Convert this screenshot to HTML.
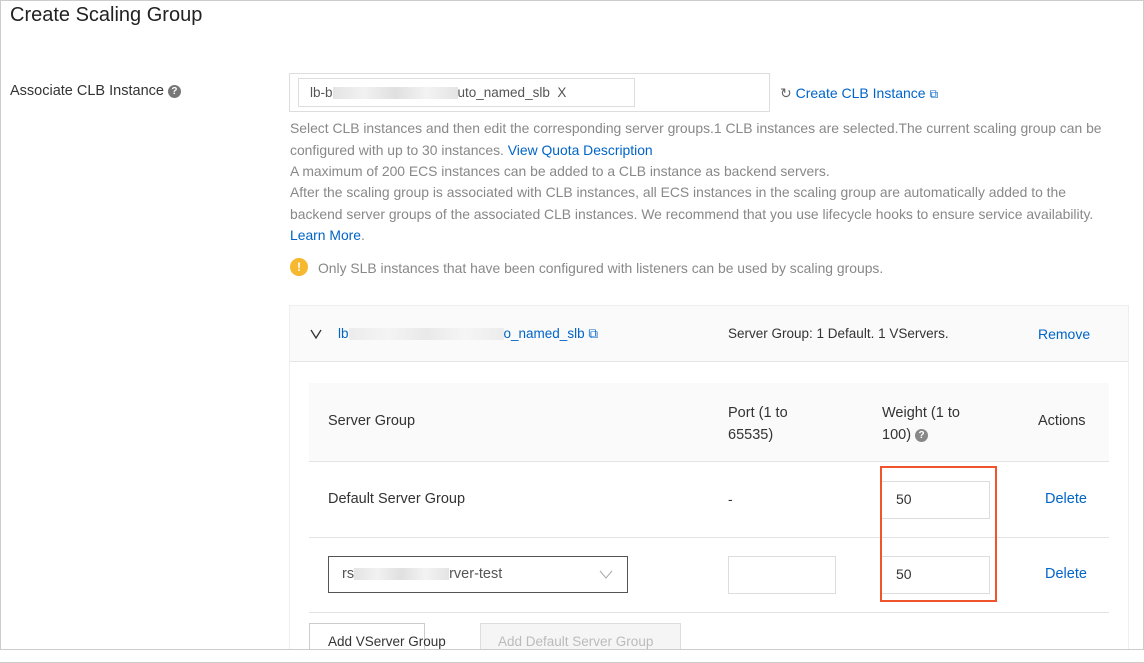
<!DOCTYPE html>
<html><head><meta charset="utf-8"><style>
*{margin:0;padding:0;box-sizing:border-box}
body{width:1144px;height:663px;background:#fff;font-family:"Liberation Sans",sans-serif;color:#333;position:relative;overflow:hidden;font-size:14px}
.a{position:absolute;white-space:nowrap}
.g{color:#888;font-size:13.9px}
.l{color:#0064c8}
.blur{display:inline-block;height:12px;background:linear-gradient(90deg,#ddd,#eee,#d8d8d8,#f0f0f0,#ddd);vertical-align:middle;opacity:.8}
.q{display:inline-block;width:13px;height:13px;border-radius:50%;background:#777;color:#fff;font-size:10px;text-align:center;line-height:13px;font-weight:bold;vertical-align:middle}
.box{position:absolute;border:1px solid #ddd;background:#fff}
</style></head><body>
<div style="position:absolute;left:0;top:0;width:1144px;height:1px;background:#ccc"></div>
<div style="position:absolute;left:0;top:0;width:1px;height:663px;background:#ccc"></div>
<div style="position:absolute;right:0;top:0;width:1px;height:663px;background:#ccc"></div>
<div class="a" style="left:10px;top:4px;font-size:20px;color:#222">Create Scaling Group</div>
<div class="a" style="left:10px;top:83px;font-size:14.5px">Associate CLB Instance <span class="q">?</span></div>

<div class="box" style="left:289px;top:73px;width:481px;height:39px"></div>
<div class="box" style="left:298px;top:78px;width:337px;height:29px"></div>
<div class="a" style="left:310px;top:85px;font-size:13.5px;color:#555">lb-b<span class="blur" style="width:125px"></span>uto_named_slb&nbsp;&nbsp;X</div>
<div class="a" style="left:780px;top:85px;font-size:14px"><span style="color:#666">↻</span> <span class="l">Create CLB Instance</span> <span class="l" style="font-size:12px">⧉</span></div>

<div class="a g" style="left:290px;top:120px">Select CLB instances and then edit the corresponding server groups.1 CLB instances are selected.The current scaling group can be</div>
<div class="a g" style="left:290px;top:142px">configured with up to 30 instances. <span class="l">View Quota Description</span></div>
<div class="a g" style="left:290px;top:163px">A maximum of 200 ECS instances can be added to a CLB instance as backend servers.</div>
<div class="a g" style="left:290px;top:184px">After the scaling group is associated with CLB instances, all ECS instances in the scaling group are automatically added to the</div>
<div class="a g" style="left:290px;top:206px">backend server groups of the associated CLB instances. We recommend that you use lifecycle hooks to ensure service availability.</div>
<div class="a g" style="left:290px;top:227px"><span class="l">Learn More</span>.</div>
<div class="a" style="left:290px;top:258px;width:18px;height:18px;border-radius:50%;background:#f5b82e;color:#fff;font-size:12px;text-align:center;line-height:18px;font-weight:bold">!</div>
<div class="a g" style="left:318px;top:260px">Only SLB instances that have been configured with listeners can be used by scaling groups.</div>

<div style="position:absolute;left:289px;top:305px;width:840px;height:344px;border:1px solid #eee;border-bottom:none"></div>
<div style="position:absolute;left:290px;top:306px;width:838px;height:56px;background:#fafafa;border-bottom:1px solid #e5e5e5"></div>
<svg class="a" style="left:310px;top:329px" width="12" height="10"><path d="M1 1 L6 9 L11 1" fill="none" stroke="#333" stroke-width="1.3"/></svg>
<div class="a l" style="left:338px;top:326px;font-size:13.5px">lb<span class="blur" style="width:155px;opacity:.5"></span>o_named_slb ⧉</div>
<div class="a" style="left:728px;top:326px;font-size:13.5px">Server Group: 1 Default. 1 VServers.</div>
<div class="a l" style="left:1038px;top:326px;font-size:14px">Remove</div>

<div style="position:absolute;left:309px;top:383px;width:800px;height:79px;background:#fafafa;border-bottom:1px solid #e3e3e3"></div>
<div class="a" style="left:328px;top:413px;font-size:14.5px">Server Group</div>
<div class="a" style="left:728px;top:402px;line-height:22px;font-size:14.5px">Port (1 to<br>65535)</div>
<div class="a" style="left:882px;top:402px;line-height:22px;font-size:14.5px">Weight (1 to<br>100) <span class="q" style="background:#888">?</span></div>
<div class="a" style="left:1038px;top:413px;font-size:14.5px">Actions</div>

<div class="a" style="left:328px;top:491px;font-size:14.5px">Default Server Group</div>
<div class="a" style="left:728px;top:491px">-</div>
<div class="box" style="left:880px;top:481px;width:110px;height:38px"></div>
<div class="a" style="left:896px;top:491px">50</div>
<div class="a l" style="left:1045px;top:491px;font-size:14.5px">Delete</div>
<div style="position:absolute;left:309px;top:537px;width:800px;height:1px;background:#e3e3e3"></div>

<div class="box" style="left:328px;top:556px;width:300px;height:37px;border-color:#555"></div>
<div class="a" style="left:342px;top:566px;color:#555;font-size:14.5px">rs<span class="blur" style="width:95px"></span>rver-test</div>
<svg class="a" style="left:599px;top:570px" width="14" height="9"><path d="M1 1 L7 8 L13 1" fill="none" stroke="#aaa" stroke-width="1"/></svg>
<div class="box" style="left:728px;top:556px;width:108px;height:38px"></div>
<div class="box" style="left:880px;top:556px;width:110px;height:38px"></div>
<div class="a" style="left:896px;top:566px">50</div>
<div class="a l" style="left:1045px;top:566px;font-size:14.5px">Delete</div>
<div style="position:absolute;left:309px;top:612px;width:800px;height:1px;background:#e3e3e3"></div>

<div style="position:absolute;left:880px;top:466px;width:117px;height:136px;border:2px solid #f0542d"></div>

<div class="box" style="left:309px;top:623px;width:116px;height:34px;border-color:#ccc"></div>
<div class="a" style="left:328px;top:634px;font-size:13.5px">Add VServer Group</div>
<div class="box" style="left:480px;top:623px;width:201px;height:34px;background:#f5f5f5"></div>
<div class="a" style="left:498px;top:634px;font-size:13.5px;color:#bbb">Add Default Server Group</div>
<div style="position:absolute;left:0;top:650px;width:1144px;height:13px;background:#fff"></div>
<div style="position:absolute;left:0;top:649px;width:1144px;height:1px;background:#ccc"></div>
<div style="position:absolute;left:0;top:662px;width:1144px;height:1px;background:#ccc"></div>
</body></html>
